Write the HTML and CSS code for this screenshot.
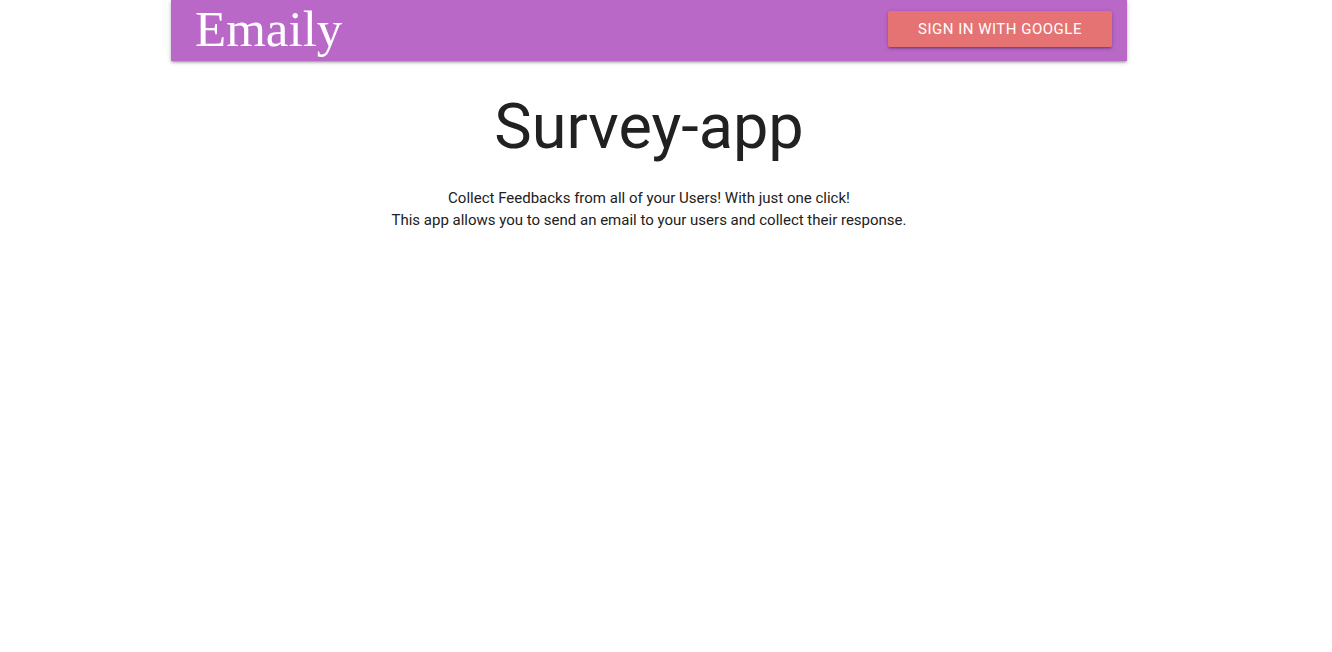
FILE: index.html
```html
<!DOCTYPE html>
<html lang="en">
<head>
<meta charset="utf-8">
<title>Emaily</title>
<link rel="stylesheet" href="styles.css">
</head>
<body>
<div class="page">
  <header class="container">
    <nav class="nav">
      <a class="brand-logo" href="#">Emaily</a>
      <a class="btn" href="#">Sign in with Google</a>
    </nav>
  </header>
  <main class="container landing">
    <h1 class="title">Survey-app</h1>
    <p class="lead">Collect Feedbacks from all of your Users! With just one click!<br>This app allows you to send an email to your users and collect their response.</p>
  </main>
</div>
</body>
</html>
```
FILE: styles.css
```css
html, body {
  margin: 0;
  padding: 0;
  background: #fff;
}
body {
  font-family: Roboto, "Liberation Sans", sans-serif;
  color: rgba(0, 0, 0, 0.87);
  font-size: 15px;
  line-height: 1.5;
}
.page {
  width: 1298px;
}
.container {
  width: 956px;
  margin: 0 auto;
}
.nav {
  height: 61px;
  background: #ba68c8;
  display: flex;
  justify-content: space-between;
  align-items: flex-start;
  box-shadow: 0 2px 2px 0 rgba(0,0,0,.14), 0 3px 1px -2px rgba(0,0,0,.12), 0 1px 5px 0 rgba(0,0,0,.2);
}
.brand-logo {
  font-family: "Liberation Serif", "Times New Roman", serif;
  font-size: 51px;
  line-height: 58px;
  color: #fff;
  text-decoration: none;
  padding-left: 24px;
}
.btn {
  margin-top: 11px;
  margin-right: 15px;
  width: 224px;
  height: 36px;
  line-height: 36px;
  text-align: center;
  background: #e57373;
  color: #fff;
  text-decoration: none;
  text-transform: uppercase;
  font-size: 15px;
  letter-spacing: 0.5px;
  border-radius: 2px;
  box-shadow: 0 2px 2px 0 rgba(0,0,0,.14), 0 3px 1px -2px rgba(0,0,0,.12), 0 1px 5px 0 rgba(0,0,0,.2);
}
.landing {
  text-align: center;
}
.title {
  margin: 31px 0 0;
  font-size: 63px;
  font-weight: 400;
  line-height: 69px;
  color: #212121;
}
.lead {
  margin: 26px 0 0;
  font-size: 15px;
  line-height: 22px;
  color: #212121;
}
```
